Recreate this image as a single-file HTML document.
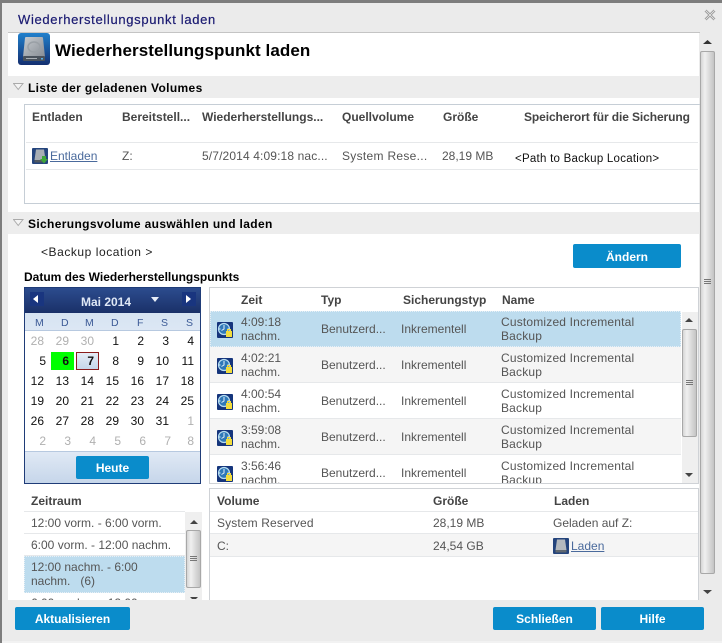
<!DOCTYPE html>
<html><head><meta charset="utf-8"><style>
html,body{margin:0;padding:0;background:#7d7d7d;}
#p{position:relative;width:722px;height:643px;overflow:hidden;background:#7d7d7d;font-family:"Liberation Sans",sans-serif;font-size:12px;color:#555;}
#p div,#p span.a,#p a,#p svg{position:absolute;}
.t{white-space:nowrap;line-height:14px;}
.b{font-weight:bold;color:#444;}
.k{font-weight:bold;color:#000;}
.btn{background:#0a8ccb;color:#fff;font-weight:bold;text-align:center;border-radius:2px;line-height:24px;height:23px;}
a{color:#4a6a9c;text-decoration:underline;white-space:nowrap;line-height:14px;}
.d{width:25px;text-align:right;line-height:14px;color:#111;}
.g{color:#b0b0b0;}
.sb{background:linear-gradient(90deg,#d6d6d6,#f0f0f0 30%,#d6d6d6 70%,#c4c4c4);border:1px solid #a8a8a8;border-radius:2px;box-sizing:border-box;}
.ln{background:#e6e8ea;height:1px;}
.c{letter-spacing:.18px;}
</style></head><body><div id="p">
<div style="left:2px;top:3px;width:720px;height:638px;background:#ebebeb;"></div>
<div style="left:2px;top:641px;width:720px;height:2px;background:#f2f2f2;"></div>
<div class="t" style="left:18px;top:13px;font-size:13px;color:#1b1b72;letter-spacing:.67px;-webkit-text-stroke:.2px #1b1b72;">Wiederherstellungspunkt laden</div>
<svg style="left:703px;top:8px;" width="15" height="14" viewBox="0 0 15 14"><path d="M2.5 2.5L11.5 11.5M11.5 2.5L2.5 11.5" stroke="#8e8e8e" stroke-width="2.6" fill="none"/><path d="M2.5 2.5L11.5 11.5M11.5 2.5L2.5 11.5" stroke="#e4e4e4" stroke-width=".9" fill="none"/></svg>
<div style="left:8px;top:32px;width:692px;height:1px;background:#c4c4c4;"></div>
<div style="left:8px;top:33px;width:691px;height:567px;background:#fff;"></div>

<svg style="left:18px;top:33px;" width="32" height="32" viewBox="0 0 32 32"><defs><linearGradient id="h" x1="0" y1="0" x2="0" y2="1"><stop offset="0" stop-color="#2080cc"/><stop offset="1" stop-color="#142f70"/></linearGradient><linearGradient id="s" x1="0" y1="0" x2="1" y2="1"><stop offset="0" stop-color="#c8ccd0"/><stop offset="1" stop-color="#868c94"/></linearGradient></defs><rect width="32" height="32" rx="3" fill="url(#h)"/><path d="M7 5Q7 4 8 4H24Q25 4 25 5L27 24H5Z" fill="url(#s)"/><rect x="5" y="23" width="22" height="5" rx="1" fill="#4a525c"/><rect x="8" y="25" width="11" height="1" fill="#a8aeb4"/><rect x="23" y="25" width="2" height="1.5" fill="#58b0e8"/><ellipse cx="16" cy="14" rx="6" ry="5" fill="none" stroke="#9aa0a6" stroke-width="1.5"/></svg>
<div class="t k" style="left:55px;top:41px;font-size:17px;line-height:19px;letter-spacing:.08px;">Wiederherstellungspunkt laden</div>

<div style="left:8px;top:76px;width:691px;height:22px;background:#ededed;"></div>
<svg style="left:13px;top:83px;" width="11" height="8" viewBox="0 0 11 8"><path d="M.5 .5H10L5.2 6.5Z" fill="#f4f4f4" stroke="#aaa"/></svg>
<div class="t k" style="left:28px;top:81px;letter-spacing:.35px;">Liste der geladenen Volumes</div>
<div style="left:24px;top:104px;width:676px;height:100px;border:1px solid #c6ced6;border-right:none;box-sizing:border-box;"></div>
<div class="t b" style="left:32px;top:110px;">Entladen</div>
<div class="t b" style="left:122px;top:110px;">Bereitstell...</div>
<div class="t b" style="left:202px;top:110px;">Wiederherstellungs...</div>
<div class="t b" style="left:342px;top:110px;">Quellvolume</div>
<div class="t b" style="left:443px;top:110px;">Größe</div>
<div class="t b" style="left:524px;top:110px;letter-spacing:-.1px;">Speicherort für die Sicherung</div>
<div class="ln" style="left:26px;top:142px;width:672px;"></div>
<div class="ln" style="left:26px;top:169px;width:672px;"></div>
<svg style="left:32px;top:148px;" width="16" height="16" viewBox="0 0 16 16"><rect width="16" height="16" rx="1" fill="#24447c"/><path d="M4 1.5H12L13.5 12H2.5Z" fill="#a8aeb4"/><rect x="2.5" y="12" width="11" height="2.5" fill="#505860"/><path d="M10 8H14V11H16L12 15.5L8 11H10Z" fill="#3fa53a"/></svg>
<a style="left:50px;top:149px;">Entladen</a>
<div class="t" style="left:122px;top:149px;">Z:</div>
<div class="t" style="left:202px;top:149px;letter-spacing:.13px;">5/7/2014 4:09:18 nac...</div>
<div class="t" style="left:342px;top:149px;letter-spacing:.3px;">System Rese...</div>
<div class="t" style="left:442px;top:149px;">28,19 MB</div>
<div class="t" style="left:515px;top:152px;color:#111;font-size:11.5px;letter-spacing:.25px;">&lt;Path to Backup Location&gt;</div>

<div style="left:8px;top:212px;width:691px;height:22px;background:#ededed;"></div>
<svg style="left:13px;top:219px;" width="11" height="8" viewBox="0 0 11 8"><path d="M.5 .5H10L5.2 6.5Z" fill="#f4f4f4" stroke="#aaa"/></svg>
<div class="t k" style="left:28px;top:217px;letter-spacing:.35px;">Sicherungsvolume auswählen und laden</div>
<div class="t" style="left:41px;top:245px;color:#222;font-size:12px;letter-spacing:.55px;">&lt;Backup location &gt;</div>
<div class="btn" style="left:573px;top:244px;width:108px;height:24px;line-height:26px;">Ändern</div>
<div class="t k" style="left:24px;top:270px;">Datum des Wiederherstellungspunkts</div>

<!-- calendar -->
<div style="left:24px;top:287px;width:177px;height:197px;border:1px solid #1f3c78;box-sizing:border-box;background:#fff;"></div>
<div style="left:25px;top:288px;width:175px;height:25px;background:linear-gradient(#2c4c8e,#1a3068);"></div>
<div style="left:30px;top:292px;width:14px;height:14px;background:#19357f;"></div>
<div style="left:182px;top:292px;width:14px;height:14px;background:#19357f;"></div>
<svg style="left:33px;top:295px;" width="6" height="8"><path d="M5 0V8L0 4Z" fill="#fff"/></svg>
<svg style="left:186px;top:295px;" width="6" height="8"><path d="M0 0V8L5 4Z" fill="#fff"/></svg>
<svg style="left:151px;top:297px;" width="9" height="6"><path d="M0 0H8L4 5Z" fill="#e8eef8"/></svg>
<div class="t" style="left:81px;top:295px;color:#dfe8f6;font-weight:bold;">Mai 2014</div>
<div style="left:25px;top:313px;width:175px;height:18px;background:linear-gradient(#d6e3f2,#dce7f4);border-bottom:1px solid #b7c9e0;box-sizing:border-box;"></div>
<div class="t" style="left:35px;top:316px;color:#3c5a96;font-size:10.5px;">M</div>
<div class="t" style="left:61px;top:316px;color:#3c5a96;font-size:10.5px;">D</div>
<div class="t" style="left:85px;top:316px;color:#3c5a96;font-size:10.5px;">M</div>
<div class="t" style="left:111px;top:316px;color:#3c5a96;font-size:10.5px;">D</div>
<div class="t" style="left:137px;top:316px;color:#3c5a96;font-size:10.5px;">F</div>
<div class="t" style="left:161px;top:316px;color:#3c5a96;font-size:10.5px;">S</div>
<div class="t" style="left:186px;top:316px;color:#3c5a96;font-size:10.5px;">S</div>
<div style="left:51px;top:352px;width:23px;height:18px;background:#00ff00;"></div>
<div style="left:76px;top:352px;width:23px;height:18px;border:1px solid #8a1c1c;box-sizing:border-box;background:linear-gradient(#e4ecf6,#c6d6ea);"></div>

<div class="d g" style="left:19px;top:334px;">28</div><div class="d g" style="left:44px;top:334px;">29</div><div class="d g" style="left:69px;top:334px;">30</div><div class="d" style="left:94px;top:334px;">1</div><div class="d" style="left:119px;top:334px;">2</div><div class="d" style="left:144px;top:334px;">3</div><div class="d" style="left:169px;top:334px;">4</div>
<div class="d" style="left:21px;top:354px;">5</div><div class="d" style="left:44px;top:354px;font-weight:bold;color:#111;">6</div><div class="d" style="left:69px;top:354px;font-weight:bold;color:#111;">7</div><div class="d" style="left:94px;top:354px;">8</div><div class="d" style="left:119px;top:354px;">9</div><div class="d" style="left:144px;top:354px;">10</div><div class="d" style="left:169px;top:354px;">11</div>
<div class="d" style="left:19px;top:374px;">12</div><div class="d" style="left:44px;top:374px;">13</div><div class="d" style="left:69px;top:374px;">14</div><div class="d" style="left:94px;top:374px;">15</div><div class="d" style="left:119px;top:374px;">16</div><div class="d" style="left:144px;top:374px;">17</div><div class="d" style="left:169px;top:374px;">18</div>
<div class="d" style="left:19px;top:394px;">19</div><div class="d" style="left:44px;top:394px;">20</div><div class="d" style="left:69px;top:394px;">21</div><div class="d" style="left:94px;top:394px;">22</div><div class="d" style="left:119px;top:394px;">23</div><div class="d" style="left:144px;top:394px;">24</div><div class="d" style="left:169px;top:394px;">25</div>
<div class="d" style="left:19px;top:414px;">26</div><div class="d" style="left:44px;top:414px;">27</div><div class="d" style="left:69px;top:414px;">28</div><div class="d" style="left:94px;top:414px;">29</div><div class="d" style="left:119px;top:414px;">30</div><div class="d" style="left:144px;top:414px;">31</div><div class="d g" style="left:169px;top:414px;">1</div>
<div class="d g" style="left:21px;top:434px;">2</div><div class="d g" style="left:46px;top:434px;">3</div><div class="d g" style="left:71px;top:434px;">4</div><div class="d g" style="left:96px;top:434px;">5</div><div class="d g" style="left:121px;top:434px;">6</div><div class="d g" style="left:146px;top:434px;">7</div><div class="d g" style="left:169px;top:434px;">8</div>
<div style="left:25px;top:451px;width:175px;height:32px;background:linear-gradient(#e0e9f5,#c6d6ea);border-top:1px solid #b7c9e0;box-sizing:border-box;"></div>
<div class="btn" style="left:76px;top:456px;width:73px;">Heute</div>

<!-- upper grid -->
<div style="left:209px;top:287px;width:490px;height:197px;border:1px solid #cfd2d6;box-sizing:border-box;overflow:hidden;"></div>
<div class="t b" style="left:241px;top:293px;">Zeit</div>
<div class="t b" style="left:321px;top:293px;">Typ</div>
<div class="t b" style="left:403px;top:293px;">Sicherungstyp</div>
<div class="t b" style="left:502px;top:293px;">Name</div>
<div style="left:210px;top:311px;width:471px;height:36px;background:#bddcee;outline:1px dotted #e8f0f6;outline-offset:-1px;"></div>
<div style="left:210px;top:347px;width:471px;height:35px;background:#f5f5f5;"></div>
<div class="ln" style="left:210px;top:382px;width:471px;"></div>
<div style="left:210px;top:419px;width:471px;height:35px;background:#f5f5f5;"></div>
<div class="ln" style="left:210px;top:418px;width:471px;"></div>
<div class="ln" style="left:210px;top:454px;width:471px;"></div>

<svg style="left:217px;top:322px;" width="16" height="16" viewBox="0 0 16 16"><rect width="16" height="16" rx="1" fill="#15357c"/><circle cx="7" cy="7" r="5.5" fill="#2f78b8" stroke="#b8def2" stroke-width="1.2"/><path d="M7 3V7L4.5 8.5M2 7H3.5M10.5 7H12" stroke="#e4f2fa" fill="none"/><rect x="9" y="9" width="6" height="6" fill="#f2dc3c"/><path d="M10.5 9V7.5H13.5V9" stroke="#f2dc3c" fill="none"/></svg>
<svg style="left:217px;top:358px;" width="16" height="16" viewBox="0 0 16 16"><rect width="16" height="16" rx="1" fill="#15357c"/><circle cx="7" cy="7" r="5.5" fill="#2f78b8" stroke="#b8def2" stroke-width="1.2"/><path d="M7 3V7L4.5 8.5M2 7H3.5M10.5 7H12" stroke="#e4f2fa" fill="none"/><rect x="9" y="9" width="6" height="6" fill="#f2dc3c"/><path d="M10.5 9V7.5H13.5V9" stroke="#f2dc3c" fill="none"/></svg>
<svg style="left:217px;top:394px;" width="16" height="16" viewBox="0 0 16 16"><rect width="16" height="16" rx="1" fill="#15357c"/><circle cx="7" cy="7" r="5.5" fill="#2f78b8" stroke="#b8def2" stroke-width="1.2"/><path d="M7 3V7L4.5 8.5M2 7H3.5M10.5 7H12" stroke="#e4f2fa" fill="none"/><rect x="9" y="9" width="6" height="6" fill="#f2dc3c"/><path d="M10.5 9V7.5H13.5V9" stroke="#f2dc3c" fill="none"/></svg>
<svg style="left:217px;top:430px;" width="16" height="16" viewBox="0 0 16 16"><rect width="16" height="16" rx="1" fill="#15357c"/><circle cx="7" cy="7" r="5.5" fill="#2f78b8" stroke="#b8def2" stroke-width="1.2"/><path d="M7 3V7L4.5 8.5M2 7H3.5M10.5 7H12" stroke="#e4f2fa" fill="none"/><rect x="9" y="9" width="6" height="6" fill="#f2dc3c"/><path d="M10.5 9V7.5H13.5V9" stroke="#f2dc3c" fill="none"/></svg>
<svg style="left:217px;top:466px;" width="16" height="16" viewBox="0 0 16 16"><rect width="16" height="16" rx="1" fill="#15357c"/><circle cx="7" cy="7" r="5.5" fill="#2f78b8" stroke="#b8def2" stroke-width="1.2"/><path d="M7 3V7L4.5 8.5M2 7H3.5M10.5 7H12" stroke="#e4f2fa" fill="none"/><rect x="9" y="9" width="6" height="6" fill="#f2dc3c"/><path d="M10.5 9V7.5H13.5V9" stroke="#f2dc3c" fill="none"/></svg>

<div class="t" style="left:241px;top:315px;">4:09:18<br>nachm.</div><div class="t" style="left:321px;top:322px;">Benutzerd...</div><div class="t" style="left:401px;top:322px;">Inkrementell</div><div class="t c" style="left:501px;top:315px;">Customized Incremental<br>Backup</div>
<div class="t" style="left:241px;top:351px;">4:02:21<br>nachm.</div><div class="t" style="left:321px;top:358px;">Benutzerd...</div><div class="t" style="left:401px;top:358px;">Inkrementell</div><div class="t c" style="left:501px;top:351px;">Customized Incremental<br>Backup</div>
<div class="t" style="left:241px;top:387px;">4:00:54<br>nachm.</div><div class="t" style="left:321px;top:394px;">Benutzerd...</div><div class="t" style="left:401px;top:394px;">Inkrementell</div><div class="t c" style="left:501px;top:387px;">Customized Incremental<br>Backup</div>
<div class="t" style="left:241px;top:423px;">3:59:08<br>nachm.</div><div class="t" style="left:321px;top:430px;">Benutzerd...</div><div class="t" style="left:401px;top:430px;">Inkrementell</div><div class="t c" style="left:501px;top:423px;">Customized Incremental<br>Backup</div>
<div style="left:210px;top:455px;width:471px;height:28px;overflow:hidden;">
<div class="t" style="left:31px;top:4px;">3:56:46<br>nachm.</div><div class="t" style="left:111px;top:11px;">Benutzerd...</div><div class="t" style="left:191px;top:11px;">Inkrementell</div><div class="t c" style="left:291px;top:4px;">Customized Incremental<br>Backup</div></div>
<div style="left:682px;top:312px;width:16px;height:171px;background:#efefef;"></div>
<svg style="left:685px;top:318px;" width="9" height="5"><path d="M0 4H8L4 0Z" fill="#444"/></svg>
<svg style="left:685px;top:473px;" width="9" height="5"><path d="M0 0H8L4 4Z" fill="#444"/></svg>
<div class="sb" style="left:682px;top:329px;width:15px;height:108px;"></div>
<div style="left:686px;top:380px;width:7px;height:5px;border-top:1px solid #777;border-bottom:1px solid #777;box-sizing:border-box;"></div>
<div style="left:686px;top:382px;width:7px;height:1px;background:#777;"></div>

<!-- lower grid -->
<div style="left:209px;top:488px;width:490px;height:112px;border:1px solid #cfd2d6;border-bottom:none;box-sizing:border-box;"></div>
<div class="t b" style="left:217px;top:494px;">Volume</div>
<div class="t b" style="left:433px;top:494px;">Größe</div>
<div class="t b" style="left:554px;top:494px;">Laden</div>
<div class="ln" style="left:210px;top:511px;width:488px;"></div>
<div class="ln" style="left:210px;top:533px;width:488px;"></div>
<div style="left:210px;top:534px;width:488px;height:23px;background:#f5f5f5;border-bottom:1px solid #e6e8ea;box-sizing:border-box;"></div>
<div class="t" style="left:217px;top:516px;letter-spacing:.13px;">System Reserved</div>
<div class="t" style="left:433px;top:516px;">28,19 MB</div>
<div class="t" style="left:553px;top:516px;">Geladen auf Z:</div>
<div class="t" style="left:217px;top:539px;">C:</div>
<div class="t" style="left:433px;top:539px;">24,54 GB</div>
<svg style="left:553px;top:538px;" width="16" height="16" viewBox="0 0 16 16"><rect width="16" height="16" rx="1" fill="#24447c"/><path d="M4 1.5H12L13.5 12H2.5Z" fill="#b4b9be"/><rect x="2.5" y="12" width="11" height="2.5" fill="#606870"/></svg>
<a style="left:571px;top:539px;">Laden</a>

<!-- Zeitraum -->
<div class="t b" style="left:31px;top:494px;">Zeitraum</div>
<div style="left:24px;top:511px;width:161px;height:89px;background:#fff;overflow:hidden;border-top:1px solid #e6e8ea;box-sizing:border-box;">
<div class="ln" style="left:0;top:21px;width:161px;"></div>
<div class="ln" style="left:0;top:43px;width:161px;"></div>
<div style="left:0;top:44px;width:161px;height:37px;background:#bddcee;outline:1px dotted #e8f0f6;outline-offset:-1px;"></div>
<div class="t" style="left:7px;top:4px;">12:00 vorm. - 6:00 vorm.</div>
<div class="t" style="left:7px;top:26px;">6:00 vorm. - 12:00 nachm.</div>
<div class="t" style="left:7px;top:48px;">12:00 nachm. - 6:00<br>nachm. &nbsp;&nbsp;(6)</div>
<div class="t" style="left:7px;top:84px;">6:00 nachm. - 12:00</div>
</div>
<div style="left:185px;top:512px;width:17px;height:88px;background:#efefef;"></div>
<svg style="left:190px;top:520px;" width="9" height="5"><path d="M0 4H8L4 0Z" fill="#444"/></svg>
<svg style="left:190px;top:597px;" width="9" height="3"><path d="M0 0H8L6 2H2Z" fill="#444"/></svg>
<div class="sb" style="left:186px;top:530px;width:15px;height:58px;"></div>
<div style="left:190px;top:556px;width:7px;height:5px;border-top:1px solid #777;border-bottom:1px solid #777;box-sizing:border-box;"></div>
<div style="left:190px;top:558px;width:7px;height:1px;background:#777;"></div>

<!-- main scrollbar -->
<svg style="left:703px;top:40px;" width="10" height="5"><path d="M0 4H9L4.5 0Z" fill="#333"/></svg>
<svg style="left:703px;top:590px;" width="10" height="5"><path d="M0 0H9L4.5 4Z" fill="#444"/></svg>
<div class="sb" style="left:700px;top:51px;width:15px;height:523px;"></div>
<div style="left:704px;top:279px;width:7px;height:5px;border-top:1px solid #777;border-bottom:1px solid #777;box-sizing:border-box;"></div>
<div style="left:704px;top:281px;width:7px;height:1px;background:#777;"></div>

<!-- footer -->
<div class="btn" style="left:15px;top:607px;width:115px;">Aktualisieren</div>
<div class="btn" style="left:493px;top:607px;width:103px;">Schließen</div>
<div class="btn" style="left:601px;top:607px;width:103px;">Hilfe</div>
</div></body></html>
